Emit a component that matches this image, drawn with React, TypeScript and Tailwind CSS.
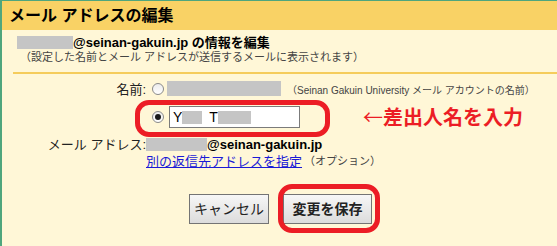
import React from 'react';

const font = "font-['Liberation_Sans','Noto_Sans_CJK_JP',sans-serif]";

function Radio({ checked }: { checked?: boolean }) {
  return (
    <span className="w-[12px] h-[12px] rounded-full border border-[#8a8a8a] bg-gradient-to-b from-[#ececec] to-white flex items-center justify-center shrink-0">
      {checked && <span className="w-[6px] h-[6px] rounded-full bg-[#1a1a1a]" />}
    </span>
  );
}

function Blur({ w, h = 'h-[13px]' }: { w: string; h?: string }) {
  return <span className={`${w} ${h} bg-[#c5c5c5] inline-block`} />;
}

export default function App() {
  return (
    <div className={`${font} relative w-[557px] h-[246px] overflow-hidden bg-[#fff7d7] border-l-2 border-t border-[#4fa67d] text-[#222]`}>
      <div className="h-[29px] bg-[#f9d265] pl-[7px] flex items-center">
        <h1 className="text-[16px] font-bold text-black leading-none">メール アドレスの編集</h1>
      </div>

      <div className="pl-[15px] pt-[5px]">
        <div className="flex items-center h-[14px] text-[13px] font-bold text-black leading-none">
          <Blur w="w-[56px]" />
          <span>@seinan-gakuin.jp の情報を編集</span>
        </div>
        <p className="pl-[3px] mt-[3px] text-[11px] text-[#444] leading-none">（設定した名前とメール アドレスが送信するメールに表示されます）</p>
      </div>

      <div className="ml-[11px] mt-[9px] h-[2px] bg-[#f5cc5b]" />

      <div className="grid grid-cols-[144px_1fr] mt-[7px] text-[13px] leading-none">
        <div className="h-[15px] flex items-end justify-end text-[#222]">名前:</div>
        <div className="h-[15px] flex items-end gap-[3px] pl-[6px]">
          <span className="mb-[1px]"><Radio /></span>
          <Blur w="w-[114px]" h="h-[15px]" />
          <span className="ml-[3px] text-[10px] text-[#444] whitespace-nowrap">（Seinan Gakuin University メール アカウントの名前）</span>
        </div>

        <div />
        <div className="h-[22px] mt-[10px] flex items-center gap-[5px] pl-[6px]">
          <Radio checked />
          <div className="w-[131px] h-[22px] border border-[#7b7b7b] bg-white flex items-center pl-[3px] text-[14px] text-black">
            <span>Y</span>
            <Blur w="w-[20px]" />
            <span className="ml-[7px]">T</span>
            <Blur w="w-[33px]" />
          </div>
          <span className="ml-[58px] text-[20px] font-bold text-[#ec1d25] whitespace-nowrap">
            <span className="font-['Noto_Sans_CJK_JP',sans-serif] font-normal">←</span>差出人名を入力
          </span>
        </div>

        <div className="h-[14px] mt-[9px] flex items-center justify-end text-[#222]">メール アドレス:</div>
        <div className="h-[14px] mt-[9px] flex items-center font-bold text-black">
          <Blur w="w-[61px]" />
          <span>@seinan-gakuin.jp</span>
        </div>

        <div />
        <div className="mt-[3px] flex items-center h-[15px]">
          <a href="#" className="text-[#1a1ad6] underline">別の返信先アドレスを指定</a>
          <span className="ml-[2px] text-[11px] text-[#444]">（オプション）</span>
        </div>
      </div>

      <div className="flex gap-[14px] pl-[187px] mt-[25px]">
        <button className="w-[80px] h-[30px] border border-[#747474] bg-gradient-to-b from-[#f7f7f7] to-[#dcdcdc] text-[14px] text-[#222]">キャンセル</button>
        <button className="w-[89px] h-[30px] border border-[#747474] bg-gradient-to-b from-[#f7f7f7] to-[#dcdcdc] text-[14px] font-bold text-[#222]">変更を保存</button>
      </div>

      <div className="absolute left-[133px] top-[99px] w-[195px] h-[37px] border-[5px] border-[#ec1d25] rounded-[14px]" />
      <div className="absolute left-[276px] top-[183px] w-[102px] h-[49px] border-[5px] border-[#ec1d25] rounded-[14px]" />
    </div>
  );
}
